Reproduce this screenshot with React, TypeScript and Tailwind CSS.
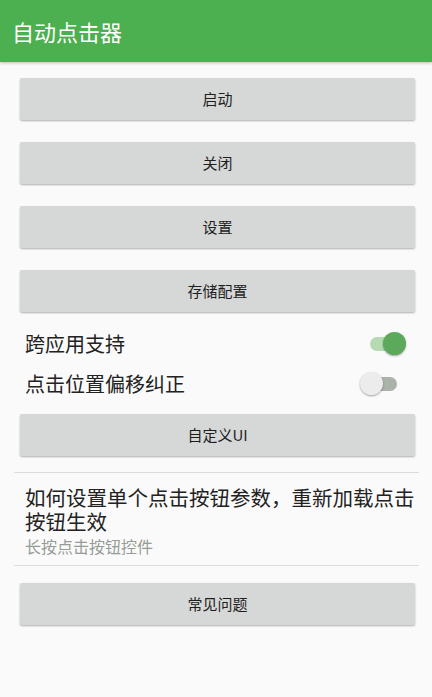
import React from "react";

const font = { fontFamily: '"Noto Sans CJK SC", "Noto Sans", sans-serif' };

function Btn({ label, className = "" }: { label: string; className?: string }) {
  return (
    <button
      className={`ml-[20px] mr-[17px] h-[42px] rounded-[2px] bg-[#d6d7d7] text-[15px] text-[#1e1e1e] shadow-[0_1px_2px_rgba(0,0,0,0.3)] flex items-center justify-center ${className}`}
    >
      {label}
    </button>
  );
}

function SwitchOn() {
  return (
    <div className="relative w-[36px] h-[24px]">
      <div className="absolute left-0 top-[5px] w-[30px] h-[14px] rounded-full bg-[#b5dcb0]" />
      <div className="absolute right-0 top-0 w-[23px] h-[23px] rounded-full bg-[#5ca95c] shadow-[0_1px_2px_rgba(0,0,0,0.35)]" />
    </div>
  );
}

function SwitchOff() {
  return (
    <div className="relative w-[37px] h-[24px]">
      <div className="absolute right-0 top-[5px] w-[28px] h-[14px] rounded-full bg-[#aab2aa]" />
      <div className="absolute left-0 top-0 w-[23px] h-[23px] rounded-full bg-[#ececec] shadow-[0_1px_2px_rgba(0,0,0,0.35)]" />
    </div>
  );
}

export default function App() {
  return (
    <div className="w-full min-h-screen bg-[#fafafa] flex flex-col" style={font}>
      <div className="h-[62px] bg-[#4caf50] flex items-center pl-[12px] shadow-[0_1px_3px_rgba(0,0,0,0.25)]">
        <span className="text-[22px] text-white">自动点击器</span>
      </div>

      <Btn label="启动" className="mt-[16px]" />
      <Btn label="关闭" className="mt-[22px]" />
      <Btn label="设置" className="mt-[22px]" />
      <Btn label="存储配置" className="mt-[22px]" />

      <div className="mt-[12px] h-[40px] flex items-center justify-between pl-[25px] pr-[26px]">
        <span className="text-[20px] text-[#222]">跨应用支持</span>
        <SwitchOn />
      </div>
      <div className="h-[40px] flex items-center justify-between pl-[25px] pr-[35px]">
        <span className="text-[20px] text-[#222]">点击位置偏移纠正</span>
        <SwitchOff />
      </div>

      <Btn label="自定义UI" className="mt-[10px]" />

      <div className="ml-[14px] mr-[13px] mt-[16px] border-t border-[#dcdcdc]" />
      <div className="pl-[25px] pr-[10px] pt-[12px] pb-[8px]">
        <div className="text-[20.5px] leading-[24px] text-[#222]">
          如何设置单个点击按钮参数，重新加载点击按钮生效
        </div>
        <div className="mt-[2px] text-[16px] leading-[22px] text-[#959c95]">长按点击按钮控件</div>
      </div>
      <div className="ml-[14px] mr-[13px] border-t border-[#dcdcdc]" />

      <Btn label="常见问题" className="mt-[17px]" />
    </div>
  );
}
